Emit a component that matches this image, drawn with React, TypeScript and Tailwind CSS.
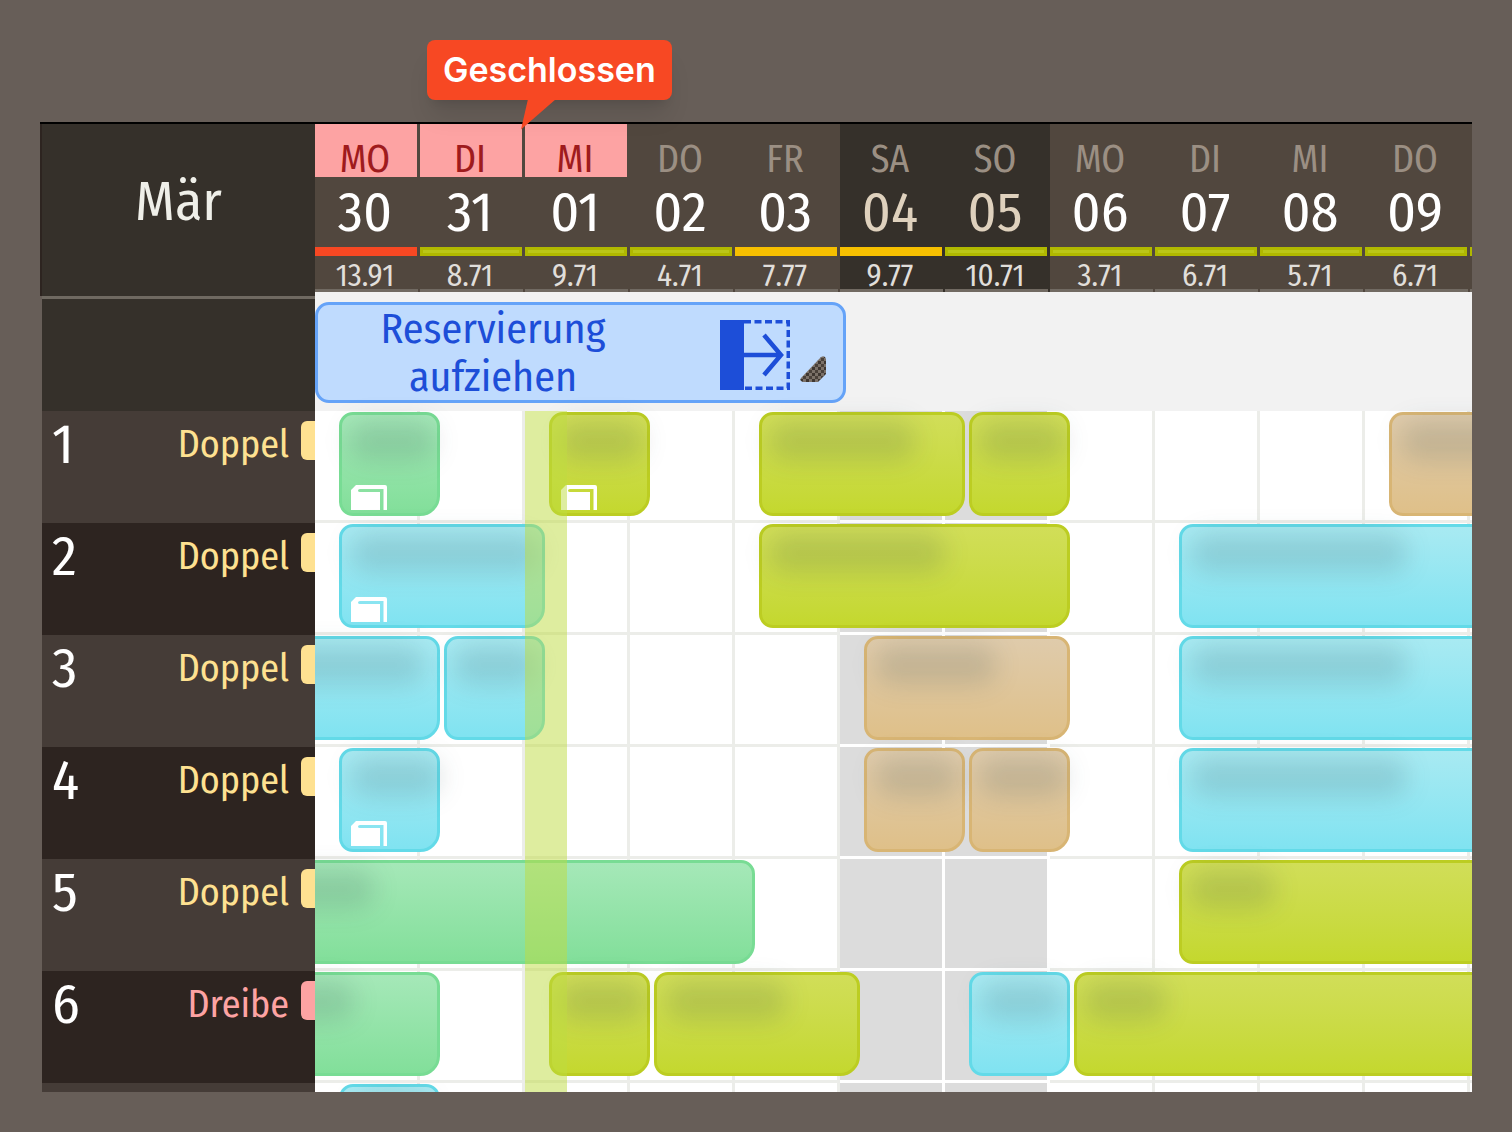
type Tone = "green" | "cyan" | "lime" | "tan";

type Day = {
  name: string;
  date: string;
  load: string;
  level: "full" | "high" | "free";
  closed?: boolean;
  weekend?: boolean;
};

type Booking = {
  start: number;
  nights: number;
  tone: Tone;
  // offset and width of the masked guest name
  mask: [number, number];
  group?: boolean;
};

type Room = {
  number: string;
  kind: string;
  bookings: Booking[];
};

const DAY_WIDTH = 105;

const days: Day[] = [
  { name: "MO", date: "30", load: "13.91", level: "full", closed: true },
  { name: "DI", date: "31", load: "8.71", level: "free", closed: true },
  { name: "MI", date: "01", load: "9.71", level: "free", closed: true },
  { name: "DO", date: "02", load: "4.71", level: "free" },
  { name: "FR", date: "03", load: "7.77", level: "high" },
  { name: "SA", date: "04", load: "9.77", level: "high", weekend: true },
  { name: "SO", date: "05", load: "10.71", level: "free", weekend: true },
  { name: "MO", date: "06", load: "3.71", level: "free" },
  { name: "DI", date: "07", load: "6.71", level: "free" },
  { name: "MI", date: "08", load: "5.71", level: "free" },
  { name: "DO", date: "09", load: "6.71", level: "free" },
  { name: "", date: "", load: "", level: "free" },
];

const rooms: Room[] = [
  {
    number: "1",
    kind: "Doppel",
    bookings: [
      { start: 0, nights: 1, tone: "green", mask: [6, 88], group: true },
      { start: 2, nights: 1, tone: "lime", mask: [6, 86], group: true },
      { start: 4, nights: 2, tone: "lime", mask: [6, 148] },
      { start: 6, nights: 1, tone: "lime", mask: [6, 88] },
      { start: 10, nights: 2, tone: "tan", mask: [8, 120] },
    ],
  },
  {
    number: "2",
    kind: "Doppel",
    bookings: [
      { start: 0, nights: 2, tone: "cyan", mask: [8, 192], group: true },
      { start: 4, nights: 3, tone: "lime", mask: [6, 178] },
      { start: 8, nights: 4, tone: "cyan", mask: [8, 218] },
    ],
  },
  {
    number: "3",
    kind: "Doppel",
    bookings: [
      { start: -1, nights: 2, tone: "cyan", mask: [8, 180] },
      { start: 1, nights: 1, tone: "cyan", mask: [6, 86] },
      { start: 5, nights: 2, tone: "tan", mask: [8, 122] },
      { start: 8, nights: 4, tone: "cyan", mask: [8, 218] },
    ],
  },
  {
    number: "4",
    kind: "Doppel",
    bookings: [
      { start: 0, nights: 1, tone: "cyan", mask: [8, 92], group: true },
      { start: 5, nights: 1, tone: "tan", mask: [8, 84] },
      { start: 6, nights: 1, tone: "tan", mask: [6, 90] },
      { start: 8, nights: 4, tone: "cyan", mask: [8, 218] },
    ],
  },
  {
    number: "5",
    kind: "Doppel",
    bookings: [
      { start: -1, nights: 5, tone: "green", mask: [40, 98] },
      { start: 8, nights: 4, tone: "lime", mask: [6, 88] },
    ],
  },
  {
    number: "6",
    kind: "Dreibe",
    bookings: [
      { start: -1, nights: 2, tone: "green", mask: [20, 98] },
      { start: 2, nights: 1, tone: "lime", mask: [6, 88] },
      { start: 3, nights: 2, tone: "lime", mask: [8, 122] },
      { start: 6, nights: 1, tone: "cyan", mask: [8, 84] },
      { start: 7, nights: 5, tone: "lime", mask: [6, 84] },
    ],
  },
];

const toneClass: Record<Tone, string> = {
  green: "border-[#78dc94] from-[#a5e8b8] to-[#82df9a]",
  cyan: "border-[#63dae8] from-[#a8eaf2] to-[#80e3f1]",
  lime: "border-[#bccd22] from-[#d1de58] to-[#c4d82e]",
  tan: "border-[#d8b574] from-[#dfcbab] to-[#dfc089]",
};

const levelClass = {
  full: "bg-[#f74823]",
  high: "bg-[#f6bf00]",
  free: "border-3 border-[#b0b800] bg-[#bac618]",
};

function GroupIcon() {
  return (
    <svg
      viewBox="0 0 36 26"
      className="absolute bottom-[3px] left-[9px] h-[26px] w-[36px]"
    >
      <path
        d="M0 26V6L5 1H34Q36 1 36 3V26H32.500V5H9Q7 5 7 6.500Q7 8 9 8H29V26Z"
        fill="#fff"
      />
    </svg>
  );
}

function BookingBar({ booking }: { booking: Booking }) {
  const { start, nights, tone, mask, group } = booking;

  return (
    <div
      className={`absolute top-px h-[104px] rounded-[14px] rounded-br-[20px] border-3 bg-linear-to-b ${toneClass[tone]}`}
      style={{
        left: start * DAY_WIDTH + 24,
        width: nights * DAY_WIDTH - 4,
      }}
    >
      <div
        className="absolute top-[6px] h-10 rounded-full bg-[#1c3c40]/14 blur-[12px]"
        style={{ left: mask[0], width: mask[1] }}
      />
      {group && <GroupIcon />}
    </div>
  );
}

function DayCells() {
  return (
    <div className="flex h-full">
      {days.map((day, i) => (
        <div
          key={i}
          className={`w-[105px] shrink-0 border-r-3 border-b-3 ${
            day.weekend
              ? "border-white bg-[#dcdcdc]"
              : "border-[#ecede9] bg-white"
          }`}
        />
      ))}
    </div>
  );
}

function DayHeader({ day }: { day: Day }) {
  return (
    <div
      className={`w-[105px] shrink-0 ${
        day.weekend ? "bg-[#35302a]" : "bg-[#51473e]"
      }`}
    >
      <div className="pr-[3px]">
        <div
          className={`flex h-[53px] items-end justify-center pr-[2px] text-[38px] leading-9 ${
            day.closed ? "bg-[#fda3a3] text-[#9f1b1d]" : "text-[#9b8f83]"
          }`}
        >
          {day.name}
        </div>
        <div
          className={`h-[70px] pr-[2px] text-center text-[56px] leading-[72px] ${
            day.weekend ? "text-[#dfd1bd]" : "text-white"
          }`}
        >
          {day.date}
        </div>
        <div className={`h-[9px] ${levelClass[day.level]}`} />
        <div className="h-[33px] pr-[2px] text-center text-[31px] leading-10 text-[#e0deda]">
          {day.load}
        </div>
      </div>
      <div className="mr-[2px] h-[3px] bg-[#716a62]" />
    </div>
  );
}

function ClosedCallout() {
  return (
    <div className="absolute -top-[84px] left-[112px] z-20 rounded-lg bg-[#f74823] px-4 py-3 font-['Inter',sans-serif] text-[34px] leading-9 font-semibold text-white shadow-xl">
      Geschlossen
      <svg viewBox="0 0 36 30" className="absolute top-full left-[93px] h-[30px] w-[36px]">
        <path d="M8 -1H36L1 29.500Z" fill="#f74823" />
      </svg>
    </div>
  );
}

function DragHint() {
  return (
    <button
      type="button"
      className="mt-[10px] flex h-[101px] w-[531px] items-center rounded-[14px] border-3 border-[#65a3f8] bg-[#bfdbfe] text-[#1d4ed8]"
    >
      <span className="w-[350px] px-12 text-center text-[42px] leading-12">
        Reservierung aufziehen
      </span>
      <svg viewBox="0 0 70 70" className="mt-1 ml-[52px] h-[70px] w-[70px]">
        <path d="M0 0H24V70H0Z" fill="currentColor" />
        <path
          d="M24 1.750H68.250V68.250H24"
          fill="none"
          stroke="currentColor"
          strokeWidth="3.500"
          strokeDasharray="7 3.500"
        />
        <path
          d="M22 35H60M44 15L61 35L44 55"
          fill="none"
          stroke="currentColor"
          strokeWidth="4.500"
        />
      </svg>
      <svg viewBox="0 0 26 28" className="mt-8 ml-[10px] h-[28px] w-[26px]">
        <defs>
          <pattern id="grip" width="6" height="6" patternUnits="userSpaceOnUse">
            <rect width="6" height="6" fill="#7b7168" />
            <rect width="3" height="3" fill="#3f3731" />
            <rect x="3" y="3" width="3" height="3" fill="#4a413a" />
          </pattern>
        </defs>
        <path d="M1 23L21 2Q25 0 26 4V19L18 27H3Q-1 26 1 23Z" fill="url(#grip)" />
      </svg>
    </button>
  );
}

export default function App() {
  return (
    <main className="min-h-screen bg-[#675e58] px-10 pt-[122px] pb-10 font-['Fira_Sans_Condensed','Roboto_Condensed','Noto_Sans_CJK_JP',sans-serif]">
      <div className="flex border-t-2 border-black">
        <aside className="w-[275px] shrink-0">
          <div className="flex h-[172px] items-center justify-center border-l-2 border-[#2d2420] bg-[#35302a] pb-4 text-[56px] text-[#efefe9]">
            Mär
          </div>
          <div className="ml-[2px] h-[115px] border-t-3 border-[#6f6961] bg-[#35302a]" />
          {rooms.map((room) => (
            <div
              key={room.number}
              className="ml-[2px] flex h-28 items-start bg-[#2d2420] pt-[10px] pl-[10px] odd:bg-[#453c37]"
            >
              <span className="flex-1 text-[56px] leading-12 text-white">
                {room.number}
              </span>
              <span
                className={`pr-3 text-[38px] leading-[46px] ${
                  room.kind === "Doppel" ? "text-[#fee191]" : "text-[#fda3a3]"
                }`}
              >
                {room.kind}
              </span>
              <span
                className={`h-[39px] w-[14px] rounded-l-md ${
                  room.kind === "Doppel" ? "bg-[#fee191]" : "bg-[#fda3a3]"
                }`}
              />
            </div>
          ))}
          <div className="ml-[2px] h-[9px] bg-[#453c37]" />
        </aside>

        <section className="relative min-w-0 flex-1">
          <ClosedCallout />
          <div className="overflow-hidden bg-[#f2f2f2]">
            <div className="flex bg-[#51473e]">
              {days.map((day, i) => (
                <DayHeader key={i} day={day} />
              ))}
            </div>

            <div className="h-[119px] overflow-hidden">
              <DragHint />
            </div>

            <div className="relative">
              {rooms.map((room) => (
                <div key={room.number} className="relative h-28">
                  <DayCells />
                  {room.bookings.map((booking) => (
                    <BookingBar key={booking.start} booking={booking} />
                  ))}
                </div>
              ))}
              <div className="relative h-[9px] overflow-hidden">
                <div className="h-28">
                  <DayCells />
                </div>
                <BookingBar
                  booking={{ start: 0, nights: 1, tone: "cyan", mask: [12, 78] }}
                />
              </div>
              {/* current day marker */}
              <div className="absolute inset-y-0 left-[210px] w-[42px] bg-[#bddc3f]/50" />
            </div>
          </div>
        </section>
      </div>
    </main>
  );
}
